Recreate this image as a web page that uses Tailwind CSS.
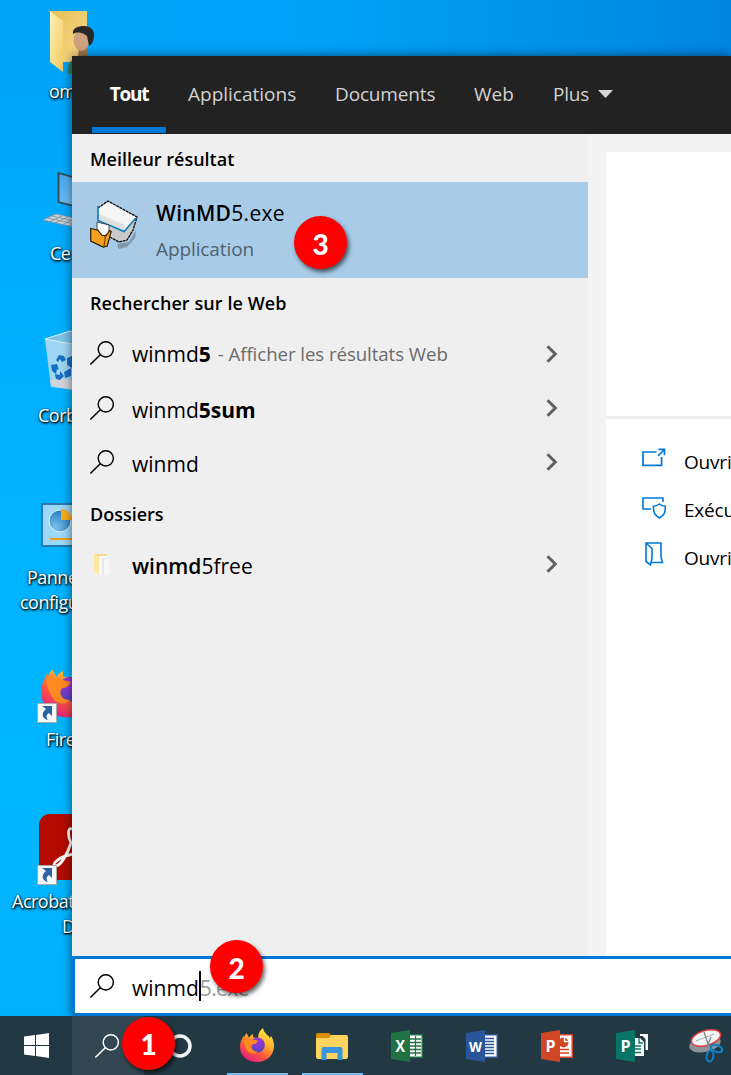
<!DOCTYPE html>
<html lang="fr">
<head>
<meta charset="utf-8">
<title>Recherche Windows</title>
<script src="https://cdn.jsdelivr.net/npm/@tailwindcss/browser@4"></script>
</head>
<body class="w-[731px] h-[1075px] overflow-hidden font-['Open_Sans','Noto_Sans',sans-serif] text-black">
<svg class="absolute size-0">
  <defs>
    <symbol id="search" viewBox="0 0 26 26"><circle cx="15.800" cy="9.300" r="7.600" fill="none" stroke="currentColor" stroke-width="1.5"/><path d="M10.300 14.700.3 24.500" fill="none" stroke="currentColor" stroke-width="1.6"/></symbol>
    <symbol id="chev" viewBox="0 0 12 18"><path d="M1.5 1.2 9.3 9 1.5 16.8" fill="none" stroke="#606060" stroke-width="3"/></symbol>
    <symbol id="shortcut" viewBox="0 0 20 20"><path d="M.5.5h19v19H.5z" fill="#f6f8fa" stroke="#aaa"/><path d="M5 3h10v10l-3-3c-3 2-3 4-1 7-5-1-8-6-2-11z" fill="#2d62a3"/></symbol>
    <linearGradient id="fold" x1="0" y1="0" x2="1" y2="1"><stop stop-color="#fff0b5"/><stop offset="1" stop-color="#f0ca61"/></linearGradient>
    <linearGradient id="foldback" x1="0" y1="0" x2="1" y2="1"><stop stop-color="#e6be55"/><stop offset="1" stop-color="#f8dc8a"/></linearGradient>
    <linearGradient id="screen" x1="0" y1="0" x2="1" y2="1"><stop stop-color="#3ea4ee"/><stop offset="1" stop-color="#8ccffb"/></linearGradient>
    <linearGradient id="fox" x1=".8" y1="0" x2=".2" y2="1"><stop stop-color="#fff04a"/><stop offset=".35" stop-color="#ffb52a"/><stop offset=".65" stop-color="#ff5a3c"/><stop offset="1" stop-color="#e31587"/></linearGradient>
    <radialGradient id="globe" cx=".5" cy=".2" r=".8"><stop stop-color="#a832dc"/><stop offset="1" stop-color="#5445c0"/></radialGradient>
    <symbol id="firefox" viewBox="0 0 34 35"><path d="M6.500 5l2.500 4.500C10.500 7.500 12 6.500 13 6l.2 3.500 5 .5c-.5-4 1.800-8 4.800-10 .6 4 3 6 6 8.500l.5 2 1.500-2.500c2 3 3 6 3 10 0 9-7 16-17 16S0 28 0 18.500C0 15 1 12 2.500 10l.5-2 1 1z" fill="url(#fox)"/><circle cx="17.500" cy="17" r="7.400" fill="url(#globe)"/><path d="M3 12c2.500-2.500 5.500-2 8-1l6.500 1.500c.4 2-2 3.500-5 4-2.500 3 0 7.500 5 7-3 3.500-9 2.500-11-2C4.500 18 3 15 3 12z" fill="#ff8a24"/></symbol>
    <radialGradient id="pie" cx=".3" cy=".8" r=".9"><stop stop-color="#7cc0ea"/><stop offset="1" stop-color="#1c76c0"/></radialGradient>
  </defs>
</svg>

<main class="relative w-[731px] h-[1075px] overflow-hidden bg-[linear-gradient(180deg,#00a2f8_0%,#00b0ff_35%,#00b6ff_75%,#00aefb_100%)]">
  <div class="absolute inset-x-0 top-0 h-14 bg-[linear-gradient(90deg,#00a5fa_0%,#00a4fa_38%,#0093e9_75%,#0085e2_100%)]"></div>

  <!-- Desktop shortcuts -->
  <div class="absolute left-0 top-0 text-white text-[18px] leading-[25px] whitespace-nowrap tracking-[-0.5px] [text-shadow:1px_1px_2px_#000,0_1px_3px_#000]">
    <svg class="absolute left-[49px] top-[10px]" width="48" height="64" viewBox="0 0 48 64"><path d="M1 1h37v51H1z" fill="url(#foldback)"/><path d="M1 1l13 10v51L1 52z" fill="url(#fold)"/><path d="M19 64c-1-14 5-15 13-15 8 0 16 2 14 15z" fill="#3b7f5d"/><path d="M30 36h9v9q-5 6-10 3z" fill="#a5774f"/><ellipse cx="32.500" cy="30" rx="8" ry="11" fill="#cda27d"/><path d="M24 24c-1-6 5-8 11-8 8 0 11 6 10 11-1 6-3 8-5 9l-2-10c-4-3-9-5-14-2z" fill="#2b2927"/></svg>
    <span class="absolute left-[49px] top-[79px]">omar</span>
    <svg class="absolute left-[42px] top-[170px]" width="40" height="60" viewBox="0 0 40 60"><path d="M16.500 3l24 7v28l-24-6z" fill="url(#screen)" stroke="#3d4650" stroke-width="1.800"/><path d="M1 50l13-6 27 6v9z" fill="#c9d3da" stroke="#8b98a2" stroke-width=".8"/><path d="M6 48l35 8M10 46l31 7M7 52l13-6M13 53l13-6M20 55l12-6M27 56l12-6" stroke="#7f8c96" stroke-width=".8"/></svg>
    <span class="absolute left-[50px] top-[241px]">Ce PC</span>
    <svg class="absolute left-[44px] top-[330px]" width="50" height="62" viewBox="0 0 50 62"><path d="M1 9l25-8 24 8-6 52-37-4z" fill="#9fd6f3"/><path d="M1 9l27 5 22-5-24-8z" fill="#7bc3e4" stroke="#d8f1fb"/><path d="M7 56l-1-6 12-2 22 6v8z" fill="#d0d4d8"/><g fill="#176fc2"><path d="M12 30l3-5 5 1 2 4-4 2-2-3-2 3z"/><path d="M7 35l6-1 2 6-2-1-1 5-4-3z"/><path d="M11 44l5 1v-4l4 5-4 4-4-1z"/><path d="M20 42l7-4v8l-6 2z"/><path d="M23 28l5-2v12l-5-3z"/></g></svg>
    <span class="absolute left-[38px] top-[403px]">Corbeille</span>
    <svg class="absolute left-[41px] top-[503px]" width="50" height="44" viewBox="0 0 50 44"><path d="M1 1h48v42H1z" fill="#9bd8f7" stroke="#2b78b3" stroke-width="2"/><circle cx="19" cy="18" r="11" fill="url(#pie)" stroke="#e5f5fc" stroke-width="1"/><path d="M20 17V6a11 11 0 0 1 11 11z" fill="#f8ad22"/><path d="M9 36h32" stroke="#f39b1c" stroke-width="2"/></svg>
    <span class="absolute left-[27px] top-[565px]">Panneau de</span>
    <span class="absolute left-[20px] top-[590px]">configuration</span>
    <svg class="absolute left-[41px] top-[661px]" width="57" height="58"><use href="#firefox"/></svg>
    <svg class="absolute left-[37px] top-[703px]" width="20" height="20"><use href="#shortcut"/></svg>
    <span class="absolute left-[46px] top-[727px]">Firefox</span>
    <svg class="absolute left-[39px] top-[814px]" width="66" height="66" viewBox="0 0 66 66"><rect width="66" height="66" rx="11" fill="#b30b00"/><path d="M33 15c-5-2-4 8-1 14-4 12-10 22-15 23-6 0 2-10 18-12" fill="none" stroke="#fff" stroke-width="2.800"/></svg>
    <svg class="absolute left-[37px] top-[865px]" width="20" height="20"><use href="#shortcut"/></svg>
    <span class="absolute left-[12px] top-[889px]">Acrobat Reader</span>
    <span class="absolute left-[62px] top-[914px]">DC</span>
  </div>

  <!-- Search window -->
  <section class="absolute left-[72px] top-14 w-[659px] h-[960px] flex flex-col shadow-[0_0_10px_rgba(0,0,0,.55)]">
    <nav class="h-[78px] shrink-0 bg-[#222] flex text-[19px] text-[#d2d2d2] pl-5 whitespace-nowrap">
      <div class="w-[74px] h-[77px] border-b-[6px] border-[#0078d7] flex items-center justify-center text-white font-bold pt-[5px] tracking-[-1.2px]">Tout</div>
      <div class="w-[147px] pl-[22px] pb-0.5 flex items-center">Applications</div>
      <div class="w-[139px] pl-[22px] pb-0.5 flex items-center tracking-[-0.15px]">Documents</div>
      <div class="w-[79px] pl-[22px] pb-0.5 flex items-center">Web</div>
      <div class="pl-[22px] pb-0.5 flex items-center gap-[9px] tracking-[-0.25px]">Plus<svg width="15" height="8"><path d="M0 0h15L7.500 8z" fill="#d6d6d6"/></svg></div>
    </nav>
    <div class="flex h-[822px]">
      <div class="w-[516px] bg-[#efefef] flex flex-col whitespace-nowrap text-[21px]">
        <h2 class="h-12 pl-[18px] pt-0.5 flex items-center text-[18px] font-semibold">Meilleur résultat</h2>
        <div class="h-24 bg-[#a8cbe8] flex pl-[18px]">
          <svg class="mt-[18px] shrink-0" width="49" height="50" viewBox="0 0 49 50"><path d="M27 44l12-2 7-12-1 8-8 9-8 2z" fill="#8296a8"/><path d="M8 6.500L18 1l29 16-4 13-6 10-8 2-9-5L8 22z" fill="#dcdcdc"/><path d="M9 7L18 1.500 46 17 34 31 9 20z" fill="#f6f6f6"/><path d="M9 14l26 11-1 6L9 20z" fill="#e0e0e0"/><path d="M34 32l12-14-4 12-6 9-8 2-6-5-2-9z" fill="#c9c9c9"/><path d="M8 8L18 1l29 16-4 13-6 10-8 2-9-5" fill="none" stroke="#111" stroke-width="1.400" stroke-dasharray="3 .6"/><path d="M8 6v14.500l26 11L46 18" fill="none" stroke="#0b7fbd" stroke-width="1.600"/><path d="M7 22l12 3v8l-9 5-3-4z" fill="#fff" stroke="#222" stroke-width=".8"/><path d="M.7 28.500l7 1.500 4 5 4 1 4-5.500 1.500 1-4 14.500-4 1L.7 41z" fill="#f5a11f" stroke="#2b1b00" stroke-width="1.200"/><path d="M15.500 36L14 46" stroke="#815000" stroke-width="1.400"/></svg>
          <div class="ml-[17px] pt-[13px]"><div class="h-9 leading-9 tracking-[0.3px]"><span class="font-semibold">WinMD</span>5.exe</div><div class="h-9 leading-9 text-[19px] tracking-[-0.1px] text-[#51616f]">Application</div></div>
        </div>
        <h2 class="h-[49px] pl-[18px] pt-0.5 flex items-center text-[18px] font-semibold tracking-[0.08px]">Rechercher sur le Web</h2>
        <div class="h-[55px] pl-[18px] pr-[30px] flex items-center"><svg class="mr-4 mb-1" width="26" height="26"><use href="#search"/></svg><span>winmd<b class="font-bold">5</b></span><span class="ml-[7px] text-[18.700px] tracking-[-0.08px] text-[#6b6b6b]">- Afficher les résultats Web</span><svg class="ml-auto mb-0.5" width="12" height="18"><use href="#chev"/></svg></div>
        <div class="h-[54px] pl-[18px] pr-[30px] flex items-center"><svg class="mr-4 mb-0.5" width="26" height="26"><use href="#search"/></svg><span class="pt-[3px]">winmd<b class="font-bold">5sum</b></span><svg class="ml-auto mb-0.5" width="12" height="18"><use href="#chev"/></svg></div>
        <div class="h-[54px] pl-[18px] pr-[30px] flex items-center"><svg class="mr-4 mb-0.5" width="26" height="26"><use href="#search"/></svg><span class="pt-[3px]">winmd</span><svg class="ml-auto mb-0.5" width="12" height="18"><use href="#chev"/></svg></div>
        <h2 class="h-12 pl-[18px] flex items-center text-[18px] font-semibold">Dossiers</h2>
        <div class="h-[54px] pl-[18px] pr-[30px] flex items-center"><svg class="mr-4" width="26" height="26" viewBox="0 0 26 26"><path d="M4 2h13v20H8z" fill="#f5da8d"/><path d="M9 4h8v19H9z" fill="#f8f8f8"/><path d="M12 6h6v17h-6z" fill="#e8e8e8"/><path d="M14 7h5v16h-5z" fill="#f6f6f6"/><path d="M4 2l5 3v18l-5-4z" fill="#ffe7a2"/></svg><span class="pt-[3px]"><b class="font-semibold">winmd</b>5free</span><svg class="ml-auto mb-0.5" width="12" height="18"><use href="#chev"/></svg></div>
      </div>
      <div class="w-[143px] bg-[#f3f3f3] pt-[18px] pl-[18px]">
        <div class="h-[264px] bg-white"></div>
        <div class="h-[540px] bg-white border-t-[3px] border-[#efefef] pt-[19px] pl-9 text-[19px] tracking-[-0.2px] whitespace-nowrap overflow-hidden">
          <div class="h-12 flex items-center"><svg class="mr-[18px] mb-2 shrink-0" width="24" height="20" viewBox="0 0 24 20" fill="none" stroke="#0078d7" stroke-width="1.700"><path d="M14.500 4H1v13.300h18.600V9M16 8l6-6M16.500 1.300h6v6"/></svg>Ouvrir</div>
          <div class="h-12 flex items-center"><svg class="mr-[18px] mb-1 shrink-0" width="24" height="22" viewBox="0 0 24 22" fill="none" stroke="#0078d7" stroke-width="1.600"><path d="M9 12H1V1h20v4M17.400 7c2 1.700 4 2.300 6 2.300 0 6-1 9-6 11.700-5-2.700-6-5.700-6-11.700 2 0 4-.6 6-2.300z"/></svg>Exécuter</div>
          <div class="h-12 flex items-center"><svg class="mr-[18px] mb-2 shrink-0" width="24" height="24" viewBox="0 0 24 24" fill="none" stroke="#0078d7" stroke-width="1.600"><path d="M4 20V1h15v14l1.500 5.500H9M4 1l6 5.500V16l-1.500 7L4 19.500"/></svg>Ouvrir</div>
        </div>
      </div>
    </div>
    <div class="h-[60px] bg-white border-[3px] border-r-0 border-[#0078d7] pl-[15px] flex items-center text-[21px]"><svg class="mr-4" width="26" height="26"><use href="#search"/></svg><span class="pt-1.5">winmd</span><span class="w-0.5 h-[30px] bg-black"></span><span class="text-[#999] tracking-[-0.6px] pt-1.5 -ml-px">5.exe</span></div>
  </section>

  <!-- Taskbar -->
  <footer class="absolute left-0 top-[1016px] w-[731px] h-[59px] bg-[#223842] flex">
    <div class="w-[72px] flex items-center justify-center"><svg width="25" height="25" viewBox="0 0 25 25" fill="#fff"><path d="M0 3.500l11-1.500v10H0zM12 1.900L25 0v12H12zM0 13h11v10L0 21.600zM12 13h13v12l-13-1.900z"/></svg></div>
    <div class="w-[72px] bg-[#324751] flex items-center justify-center text-white"><svg width="26" height="26"><use href="#search"/></svg></div>
    <div class="w-[72px] flex items-center justify-center"><svg width="24" height="24"><circle cx="12" cy="12" r="10" fill="none" stroke="#f1f4f5" stroke-width="3.500"/></svg></div>
    <div class="w-[82px] flex flex-col items-center justify-between pt-3"><svg width="34" height="35"><use href="#firefox"/></svg><span class="w-[61px] h-0.5 bg-[#76b9ed]"></span></div>
    <div class="w-[68px] flex flex-col items-center justify-between pt-[17px]"><svg width="32" height="28" viewBox="0 0 32 28"><path d="M0 2q0-2 2-2h11l3 3v3H0z" fill="#d89000"/><path d="M0 5h13l2-3h15q2 0 2 2v20q0 2-2 2H2q-2 0-2-2z" fill="#ffd45d"/><path d="M5.500 27V16q0-2 2-2h17q2 0 2 2v11h-5v-7h-11v7z" fill="#3795dd"/></svg><span class="w-[61px] h-0.5 bg-[#76b9ed]"></span></div>
    <div class="w-[82px] flex items-center justify-center"><svg width="32" height="32" viewBox="0 0 32 32"><path d="M18 4h14v24H18z" fill="#207245"/><path d="M19 5.500h11.500v21H19z" fill="#fff"/><path d="M19 9h11M19 12.500h11M19 16h11M19 19.500h11M19 23h11M24.500 6v20" stroke="#207245" stroke-width="1.300"/><path d="M0 3l19-3v32L0 29z" fill="#207245"/><text x="4.500" y="22" font-family="Open Sans" font-weight="700" font-size="16" textLength="9.500" lengthAdjust="spacingAndGlyphs" fill="#fff">X</text></svg></div>
    <div class="w-[68px] flex items-center justify-center"><svg width="32" height="32" viewBox="0 0 32 32"><path d="M18 4h14v24H18z" fill="#2a5699"/><path d="M19 5.500h11.500v21H19z" fill="#fff"/><path d="M19 8.500h9M19 11.500h9M19 14.500h9M19 17.500h9M19 20.500h9M19 23.500h9" stroke="#2a5699" stroke-width="1.300"/><path d="M0 3l19-3v32L0 29z" fill="#2a5699"/><text x="3" y="21.500" font-family="Open Sans" font-weight="700" font-size="15" textLength="13" lengthAdjust="spacingAndGlyphs" fill="#fff">W</text></svg></div>
    <div class="w-[82px] flex items-center justify-center"><svg width="32" height="32" viewBox="0 0 32 32"><path d="M18 4h14v24H18z" fill="#d24625"/><path d="M19 5.500h11.500v21H19z" fill="#fff"/><circle cx="22.500" cy="12.500" r="5" fill="#d24625"/><path d="M23.500 6v5.500H29" fill="none" stroke="#fff" stroke-width="1.500"/><path d="M19 19.500h9M19 23h9" stroke="#d24625" stroke-width="1.600"/><path d="M0 3l19-3v32L0 29z" fill="#d24625"/><text x="4.500" y="21.500" font-family="Open Sans" font-weight="700" font-size="16" fill="#fff">P</text></svg></div>
    <div class="w-[68px] flex items-center justify-center"><svg width="33" height="32" viewBox="0 0 33 32"><path d="M24 4h8v16h-2.500V9l-3-3h-2.500z" fill="#fff"/><path d="M19 8h5l4 4v14h-9z" fill="#fff"/><path d="M23 8v5h4M19 16h6M19 19h6M19 22.500h6" fill="none" stroke="#077568" stroke-width="1.400"/><path d="M0 3l19-3v32L0 29z" fill="#077568"/><text x="4.500" y="21.500" font-family="Open Sans" font-weight="700" font-size="16" fill="#fff">P</text></svg></div>
    <div class="w-[65px] shrink-0 pl-[23px] pt-3"><svg width="38" height="36" viewBox="0 0 38 36"><ellipse cx="16" cy="16" rx="16" ry="8" transform="rotate(-12 16 16)" fill="#8e9496"/><ellipse cx="17" cy="10" rx="15" ry="7.500" transform="rotate(-16 17 10)" fill="#f2f4f5" stroke="#df3d42" stroke-width="1.500"/><path d="M7 13l18-7" stroke="#a9afb2" stroke-width="1"/><path d="M15 4l5 15M22 9l-4 10" stroke="#7d868b" stroke-width="1.300"/><g fill="none" stroke="#147cc0" stroke-width="2.200"><ellipse cx="27.500" cy="20.500" rx="6" ry="3.300" transform="rotate(20 27.500 20.500)"/><ellipse cx="21" cy="28" rx="3.300" ry="5.500" transform="rotate(10 21 28)"/></g></svg></div>
  </footer>

  <!-- Step markers -->
  <div class="absolute left-[294px] top-[216px] size-[53px] rounded-full bg-[#fe0000] flex items-center justify-center text-white font-['Lato',sans-serif] font-black text-[28px] shadow-[2px_3px_4px_rgba(0,0,0,.6)] pt-0.5">3</div>
  <div class="absolute left-[210px] top-[940px] size-[53px] rounded-full bg-[#fe0000] flex items-center justify-center text-white font-['Lato',sans-serif] font-black text-[28px] shadow-[2px_3px_4px_rgba(0,0,0,.6)] pt-0.5">2</div>
  <div class="absolute left-[122px] top-[1017px] size-[53px] rounded-full bg-[#fe0000] flex items-center justify-center text-white font-['Lato',sans-serif] font-black text-[28px] shadow-[2px_3px_4px_rgba(0,0,0,.6)]">1</div>
</main>
</body>
</html>
